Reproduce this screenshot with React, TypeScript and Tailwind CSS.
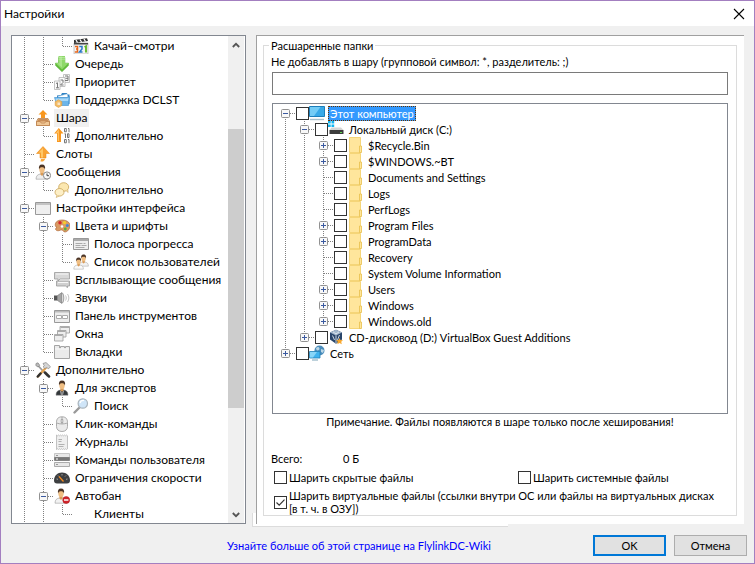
import { useState } from "react";
import type { ReactNode } from "react";

type TreeNode = {
  id: string;
  label: string;
  // one character per column: "|" passes through, "T" has a sibling below,
  // "L" is the last one, "F" is the very first one
  guides: string;
  toggle?: "+" | "-";
  icon?: ReactNode;
};

function Icon({ children }: { children?: ReactNode }) {
  return (
    <svg width="16" height="16" viewBox="0 0 16 16" className="shrink-0" aria-hidden="true">
      {children}
    </svg>
  );
}

const Person = ({ body, x = 0 }: { body: string; x?: number }) => (
  <g transform={`translate(${x} 0)`}>
    <path d="M1 15.2c0-3.6 1.8-4.8 5-5.4h2c3.200.6 5 1.800 5 5.400Z" fill={body} stroke="#8a8a8a" strokeWidth=".5" />
    <path d="M5.500 8h3v2.500L7 12l-1.500-1.500Z" fill="#d99a55" />
    <ellipse cx="7" cy="5.500" rx="2.700" ry="3.600" fill="#f0be82" />
    <path d="M4 5.500C3.500 2.500 4.500.6 7 .6s3.500 1.900 3 4.900C9.500 3.800 8.500 3.300 7 3.300S4.500 3.800 4 5.500Z" fill="#4b3425" />
  </g>
);

const movieIcon = (
  <Icon>
    <path d="M1 5h14v11H1Z" fill="#f4f4f4" stroke="#aaa" strokeWidth=".6" />
    <path d="M1 2 14 .3 15 3 1 5Z" fill="#333" />
    <path d="m3 2 1.500 2.500M7 1.500 8.500 4M11 1l1.500 2.500" stroke="#fff" strokeWidth="1.300" />
    <path d="M1 5h14v1.500H1Z" fill="#444" />
    <path d="M2 8.500h2.500v2.500H3h1.500v3H1.800" fill="none" stroke="#e8681c" strokeWidth="1.500" />
    <path d="M6.300 8.500h2.700v2.500l-2.500 3h3" fill="none" stroke="#2878c8" strokeWidth="1.500" />
    <path d="m11.500 9 1.500-.8v6.300" fill="none" stroke="#5bb520" strokeWidth="1.800" />
  </Icon>
);

const queueIcon = (
  <Icon>
    <path d="M4.500 1.500h6.500V7h3.500v2.500L8 15.800 1.500 9.500V7h3Z" fill="#62bb3c" stroke="#4fa42c" strokeWidth=".4" />
    <path d="M4.500 0h6.500v7h3.500L8 13.500 1.500 7h3Z" fill="#8ed86a" />
    <path d="M5.500.5H8v11L3.500 7.500h2Z" fill="#a9e58a" />
    <path d="M4.500 1.500h6.500M4.500 3.200h6.500" stroke="#c9f0b5" strokeWidth=".6" />
  </Icon>
);

const priorityIcon = (
  <Icon>
    <g fill="#fafafa" stroke="#b5b5b5" strokeWidth=".8">
      <path d="M9.500.5h6v8h-6Z" />
      <path d="M5 3.500h6v9H5Z" />
      <path d="M.5 7h5.500v8.500H.5Z" />
    </g>
    <g fill="none" stroke="#777" strokeWidth="1">
      <path d="M11 2h3v4.500h-3m.5-2.200H14" />
      <path d="M6.500 6h2.500v2.500L6.500 11H9.500" />
      <path d="m2 9.500 1.500-.7v5M2 13.800h3" />
    </g>
  </Icon>
);

const dclstIcon = (
  <Icon>
    <path d="M3 3.500 7 3l1-2h5l.5 1.500h2V12H3Z" fill="#2f82c4" />
    <path d="m4 4.500 9-2.500 1 3.500H4Z" fill="#fff" stroke="#b9d6ea" strokeWidth=".5" />
    <path d="M.5 5.500H13l2.500-1L14.500 13.500H3Z" fill="#6bb5ea" stroke="#3d8fcd" strokeWidth=".6" />
    <path d="M1.500 6.500H13l1.500-.7L14 9H2Z" fill="#a7d8f8" />
    <path d="m4.500 7.800 3.300 1.900v3.800l-3.300 1.900-3.300-1.900V9.700Z" fill="#f3bd68" stroke="#dd9a3a" strokeWidth=".6" />
    <path d="M3.500 10.500h2.500v2.500H3.500Z" fill="#fff" opacity=".6" />
  </Icon>
);

const shareIcon = (
  <Icon>
    <path d="M8 0 12.500 4.500H10V8H6V4.500H3.500Z" fill="#f8971e" />
    <path d="m3 8.500-1.500 3v4h13v-4l-1.500-3Z" fill="#f2c894" stroke="#ad7440" strokeWidth=".7" />
    <path d="M3.500 9h9l1 2.500h-11Z" fill="#c98d58" />
    <path d="M1.500 11.500h3.800L6.200 13h3.600l.9-1.500h3.800v4h-13Z" fill="#f0c795" stroke="#b87a45" strokeWidth=".7" />
  </Icon>
);

const shareMoreIcon = (
  <Icon>
    <path d="m4.800 0 4.700 5.500H7V14H3V5.500H.2Z" fill="#f8971e" />
    <path d="m4.800 1 .3 12H3.800V5H2Z" fill="#ffc266" />
    <g fill="none" stroke="#666" strokeWidth=".9">
      <path d="M10.500.5h1.800v3.300h-1.800Zm3.500 0h1v3.700M10.500 5.800h1V10m2-4.200H15v3.700h-1.500ZM10.500 11.500h1.800v3.300h-1.800Zm3.500 0h1v3.700" />
    </g>
  </Icon>
);

const slotsIcon = (
  <Icon>
    <path d="M8 .5 14.500 7.500H11V12H5V7.500H1.500Z" fill="#f9a333" stroke="#e8860e" strokeWidth=".5" />
    <path d="M8 2v9.500H6V6.500H3.800Z" fill="#ffc766" />
    <path d="M6 13h2.500l1-.5.5 1.300-2 1.700H5.500Z" fill="#f9a83a" />
  </Icon>
);

const messagesIcon = (
  <Icon>
    <Person body="#eeeeee" />
    <circle cx="12" cy="11.500" r="3.600" fill="#fafafa" stroke="#888" />
    <path d="M12 9.500v2.200h2" fill="none" stroke="#444" />
  </Icon>
);

const chatIcon = (
  <Icon>
    <ellipse cx="9.700" cy="5" rx="5" ry="4.300" fill="#fbe7b0" stroke="#c9a356" strokeWidth=".8" />
    <path d="m12 8.500 2 2-.2-3" fill="#fbe7b0" stroke="#c9a356" strokeWidth=".6" />
    <ellipse cx="5.500" cy="10.300" rx="4.500" ry="3.800" fill="#fdefc6" stroke="#c9a356" strokeWidth=".8" />
    <path d="m3 13.300-.8 2.200 3-1.500" fill="#fdefc6" stroke="#c9a356" strokeWidth=".6" />
  </Icon>
);

const windowIcon = (
  <Icon>
    <path d="M.5 2.500h15v12H.5Z" fill="#efefef" stroke="#999" />
    <path d="M1 3h14v2H1Z" fill="#c4c4c4" />
  </Icon>
);

const paletteIcon = (
  <Icon>
    <path d="M8 2c4.500 0 8 2.200 8 5.500S13.500 14 11 14c-2 0-1.500-2-3.500-2-1.500 0-2 1-4 .7C1 12.300 1 10 3 9.500 0 8.500.2 2 8 2Z" fill="#d99a63" stroke="#a8622f" strokeWidth=".6" />
    <circle cx="6" cy="4.800" r="1.700" fill="#d8282b" />
    <circle cx="10.500" cy="4.600" r="1.600" fill="#f4cf2a" />
    <circle cx="13.300" cy="7.500" r="1.500" fill="#3e87d6" />
    <circle cx="11.300" cy="11" r="1.400" fill="#56b33b" />
    <circle cx="8" cy="8.500" r="1.300" fill="#fff" />
  </Icon>
);

const progressIcon = (
  <Icon>
    <path d="M.5 2.500h15v11H.5Z" fill="#eee" stroke="#999" />
    <path d="M1 3h14v2H1Z" fill="#aaa" />
    <path d="M2.500 7.500h7m1 0h2M2.500 9.500h5m1 0h5M2.500 11.500h9" stroke="#aaa" />
  </Icon>
);

const usersIcon = (
  <Icon>
    <g transform="translate(5 0) scale(.8)">
      <Person body="#f2f2f2" />
    </g>
    <g transform="translate(0 3) scale(.8)">
      <Person body="#fafafa" />
    </g>
  </Icon>
);

const popupIcon = (
  <Icon>
    <path d="M.5.5h15v6.500H6L4 9V7H.5Z" fill="#d8d8d8" stroke="#999" strokeWidth=".8" />
    <path d="M2 2h12" stroke="#f7f7f7" />
    <path d="M15.500 9H2.500v5h9l2 1.700V14h2Z" fill="#d0d0d0" stroke="#999" strokeWidth=".8" />
    <path d="M4 10.500h10" stroke="#f7f7f7" />
  </Icon>
);

const soundIcon = (
  <Icon>
    <path d="M0 5.500h3.500v5H0Z" fill="#555" />
    <path d="m3.500 5.500 4.500-3v11l-4.500-3Z" fill="#a5a5a5" stroke="#777" strokeWidth=".6" />
    <path d="M8.500 3c1.800 2 1.800 8 0 10" fill="#ddd" stroke="#888" strokeWidth=".8" />
    <path d="M11.500 5.500c1 1.500 1 3.500 0 5m2-6.500c1.800 2.300 1.800 5.700 0 8" fill="none" stroke="#bbb" strokeWidth=".9" />
  </Icon>
);

const toolbarIcon = (
  <Icon>
    <path d="M.5 2.500h15v12H.5Z" fill="#ececec" stroke="#999" />
    <path d="M1 3h14v1.500H1Z" fill="#bbb" />
    <path d="M2.500 7.500h5v3h-5Zm6 0h5v3h-5Z" fill="#fff" stroke="#aaa" />
  </Icon>
);

const windowsIcon = (
  <Icon>
    <g fill="#eee" stroke="#999" strokeWidth=".8">
      <path d="M6 .5h9.500V7H6Z" />
      <path d="M3.500 4.500H12V11H3.500Z" />
      <path d="M.5 8.500H9V15H.5Z" />
    </g>
    <path d="M6.500 1.500H15M4 5.500h7.500M1 9.500h7.500" stroke="#aaa" />
  </Icon>
);

const tabsIcon = (
  <Icon>
    <path d="M.5 1.500h5V4h1V2.500h4V4h1V2.500h4v12H.5Z" fill="#ebebeb" stroke="#a5a5a5" />
    <path d="M1 5h14" stroke="#fafafa" />
  </Icon>
);

const toolsIcon = (
  <Icon>
    <path d="m2.500 3 10 11" stroke="#9a9a9a" strokeWidth="1.800" />
    <path d="M1 1.500 3 .8l1.800 2.500L3 5 .8 3.500Z" fill="#bbb" stroke="#777" strokeWidth=".6" />
    <path d="M11.500 5 3 14.500" stroke="#e6a452" strokeWidth="2.400" strokeLinecap="round" />
    <path d="m5.500 11.500-2.700 3" stroke="#303030" strokeWidth="2.500" strokeLinecap="round" />
    <path d="m8 1.500 3-1 4.500 4.200-1.800 2-2.200-1L9.800 6.500 8.200 5l1-1.500Z" fill="#d5d5d5" stroke="#777" strokeWidth=".6" />
    <path d="m10 10.500 4 4" stroke="#333" strokeWidth="2.500" strokeLinecap="round" />
  </Icon>
);

const expertIcon = (
  <Icon>
    <Person body="#33373a" x={1} />
    <path d="m6.300 10.500 1.700 2 1.700-2L9 15H7Z" fill="#fff" />
    <path d="M8 11.500V15" stroke="#222" />
  </Icon>
);

const searchIcon = (
  <Icon>
    <path d="m6 10-4.500 4.500" stroke="#999" strokeWidth="2.400" strokeLinecap="round" />
    <circle cx="9.800" cy="5.500" r="4.700" fill="#cfe5f8" stroke="#a9b4bc" strokeWidth="1.200" />
    <path d="M7 5c.5-2 2-2.800 4-2.500" fill="none" stroke="#fff" strokeWidth="1.300" />
  </Icon>
);

const mouseIcon = (
  <Icon>
    <path d="M2.500 6.500C2.500 2.500 4.500.8 8 .8s5.500 1.700 5.500 5.700v4c0 3-2.200 5-5.500 5s-5.500-2-5.500-5Z" fill="#ebebeb" stroke="#999" strokeWidth=".8" />
    <path d="M2.700 7c3.500 1.300 7 1.300 10.600 0M8 1v2.500m0 3V8" fill="none" stroke="#999" strokeWidth=".8" />
    <path d="M7.200 3.500h1.600v3H7.200Z" fill="#fff" stroke="#888" strokeWidth=".7" />
  </Icon>
);

const logIcon = (
  <Icon>
    <path d="m2.500 1 1 .8 1-.8 1 .8 1-.8 1 .8 1-.8 1 .8 1-.8 1 .8 1-.8 1 .8v13l-1 .8-1-.8-1 .8-1-.8-1 .8-1-.8-1 .8-1-.8-1 .8-1-.8-1 .8Z" fill="#efefef" stroke="#aaa" strokeWidth=".7" />
    <path d="M4.500 5.500H8m-3.500 2h3m-3 3h6m-6 2h5" stroke="#aaa" strokeWidth=".9" />
  </Icon>
);

const commandsIcon = (
  <Icon>
    <path d="M.5 1.500h15v4H.5Z" fill="#e8e8e8" stroke="#bbb" strokeWidth=".8" />
    <path d="M.5 5.500h15v3H.5Z" fill="#777" stroke="#777" strokeWidth=".8" />
    <path d="M.5 10.500h15v4H.5Z" fill="#e8e8e8" stroke="#999" strokeWidth=".8" />
    <path d="M2 3.500h2m-2 9h2" stroke="#999" />
    <path d="M2 7h2" stroke="#fff" />
  </Icon>
);

const speedIcon = (
  <Icon>
    <path d="M0 10.500C0 5.500 3.500 2.500 8 2.500s8 3 8 8c0 2-1 3-3 3H3c-2 0-3-1-3-3Z" fill="#3d3f41" />
    <path d="m2.500 9 1.500.3M4 5.500l1 1M8 4v1.500m4 0-1 1M13.500 9 12 9.300" stroke="#bbb" strokeWidth=".8" />
    <path d="m5 6.500 4.500 5" stroke="#f58a1f" strokeWidth="1.300" />
  </Icon>
);

const banIcon = (
  <Icon>
    <Person body="#f2f2f2" />
    <circle cx="12.200" cy="12" r="3.500" fill="#d0232a" stroke="#a81a1f" strokeWidth=".5" />
    <path d="M10 12h4.400" stroke="#fff" strokeWidth="1.500" />
  </Icon>
);

const computerIcon = (
  <Icon>
    <path d="M.5 1.500h15v10H.5Z" fill="#38a9e8" stroke="#1d7fbb" />
    <path d="M1 2h10.500L5 11H1Z" fill="#74ccf6" />
    <path d="M1 14.500h14" stroke="#a9c0cc" strokeWidth="1.400" />
  </Icon>
);

const driveIcon = (
  <Icon>
    <path d="M0 0h2.700v2.500H0Zm3.500 0h2.700v2.500H3.500ZM0 3.400h2.700V6H0Zm3.500 0h2.700V6H3.500Z" fill="#13b5f0" />
    <path d="m1.500 9 2-2.500h9.500L15.500 9Z" fill="#d5d5d5" />
    <path d="M1.500 9h14v4h-14Z" fill="#3c3c3c" />
    <path d="M12 11.500h2" stroke="#5fdc52" />
  </Icon>
);

const folderIcon = (
  <Icon>
    <path d="M2.500.5h11v15h-11Z" fill="#ffe69c" stroke="#f3cd62" strokeWidth=".8" />
    <path d="M12.500 9h2v6.500h-2Z" fill="#ffe69c" stroke="#e9bf4b" strokeWidth=".8" />
  </Icon>
);

const discIcon = (
  <Icon>
    <path d="m8 .8 6 2.700v7L8 14.800l-6-4.300v-7Z" fill="#28456b" />
    <path d="M8 6.500 2 3.500 8 .8l6 2.700Z" fill="#a4b9ce" />
    <path d="m5 3 3 1.800L11 3M8 6.500V14M4.500 6.500l2 4.500M11.500 6l-2 5" fill="none" stroke="#dde6ee" strokeWidth=".9" />
    <path d="m11.500 9 1 2 2.500.2-1.800 1.600.6 2.400-2.300-1.200L9.300 15.200l.5-2.400L8 11.200l2.500-.2Z" fill="#f8a72c" />
  </Icon>
);

const networkIcon = (
  <Icon>
    <circle cx="10.500" cy="5.500" r="5" fill="#4b8dbb" />
    <path d="M7 3c2-1.500 3-1 3.500.5S8.500 6 7.500 5Zm5 1 3 1-1 3-2-1Z" fill="#bcd7e6" />
    <path d="M.5 6.500h10.500v6.500H.5Z" fill="#3fb2ee" stroke="#2381b6" strokeWidth=".8" />
    <path d="M1 7h7L4 12.500H1Z" fill="#88d5f8" />
    <path d="M3 15h6" stroke="#9ab8c8" strokeWidth="1.300" />
  </Icon>
);

const pages: TreeNode[] = [
  { id: "preview", label: "Качай–смотри", guides: "||L", icon: movieIcon },
  { id: "queue", label: "Очередь", guides: "|T", icon: queueIcon },
  { id: "priority", label: "Приоритет", guides: "|T", icon: priorityIcon },
  { id: "dclst", label: "Поддержка DCLST", guides: "|L", icon: dclstIcon },
  { id: "share", label: "Шара", guides: "T", toggle: "-", icon: shareIcon },
  { id: "share-more", label: "Дополнительно", guides: "|L", icon: shareMoreIcon },
  { id: "slots", label: "Слоты", guides: "T", icon: slotsIcon },
  { id: "messages", label: "Сообщения", guides: "T", toggle: "-", icon: messagesIcon },
  { id: "messages-more", label: "Дополнительно", guides: "|L", icon: chatIcon },
  { id: "ui", label: "Настройки интерфейса", guides: "T", toggle: "-", icon: windowIcon },
  { id: "colors", label: "Цвета и шрифты", guides: "|T", toggle: "-", icon: paletteIcon },
  { id: "progress", label: "Полоса прогресса", guides: "||T", icon: progressIcon },
  { id: "users", label: "Список пользователей", guides: "||L", icon: usersIcon },
  { id: "popups", label: "Всплывающие сообщения", guides: "|T", icon: popupIcon },
  { id: "sounds", label: "Звуки", guides: "|T", icon: soundIcon },
  { id: "toolbar", label: "Панель инструментов", guides: "|T", icon: toolbarIcon },
  { id: "windows", label: "Окна", guides: "|T", icon: windowsIcon },
  { id: "tabs", label: "Вкладки", guides: "|L", icon: tabsIcon },
  { id: "advanced", label: "Дополнительно", guides: "T", toggle: "-", icon: toolsIcon },
  { id: "experts", label: "Для экспертов", guides: "|T", toggle: "-", icon: expertIcon },
  { id: "search", label: "Поиск", guides: "||L", icon: searchIcon },
  { id: "click", label: "Клик-команды", guides: "|T", icon: mouseIcon },
  { id: "logs", label: "Журналы", guides: "|T", icon: logIcon },
  { id: "commands", label: "Команды пользователя", guides: "|T", icon: commandsIcon },
  { id: "speed", label: "Ограничения скорости", guides: "|T", icon: speedIcon },
  { id: "autoban", label: "Автобан", guides: "|T", toggle: "-", icon: banIcon },
  { id: "clients", label: "Клиенты", guides: "||L" },
];

const folders: TreeNode[] = [
  { id: "pc", label: "Этот компьютер", guides: "F", toggle: "-", icon: computerIcon },
  { id: "c", label: "Локальный диск (C:)", guides: "|T", toggle: "-", icon: driveIcon },
  { id: "recycle", label: "$Recycle.Bin", guides: "||T", toggle: "+", icon: folderIcon },
  { id: "bt", label: "$WINDOWS.~BT", guides: "||T", toggle: "+", icon: folderIcon },
  { id: "docs", label: "Documents and Settings", guides: "||T", icon: folderIcon },
  { id: "logs", label: "Logs", guides: "||T", icon: folderIcon },
  { id: "perf", label: "PerfLogs", guides: "||T", icon: folderIcon },
  { id: "pf", label: "Program Files", guides: "||T", toggle: "+", icon: folderIcon },
  { id: "pd", label: "ProgramData", guides: "||T", toggle: "+", icon: folderIcon },
  { id: "recovery", label: "Recovery", guides: "||T", icon: folderIcon },
  { id: "svi", label: "System Volume Information", guides: "||T", icon: folderIcon },
  { id: "usr", label: "Users", guides: "||T", toggle: "+", icon: folderIcon },
  { id: "win", label: "Windows", guides: "||T", toggle: "+", icon: folderIcon },
  { id: "old", label: "Windows.old", guides: "||L", toggle: "+", icon: folderIcon },
  { id: "d", label: "CD-дисковод (D:) VirtualBox Guest Additions", guides: "|L", toggle: "+", icon: discIcon },
  { id: "net", label: "Сеть", guides: "L", toggle: "+", icon: networkIcon },
];

function Guides({ node, height }: { node: TreeNode; height: number }) {
  const mid = height / 2;
  return (
    <>
      {node.guides.split("").map((g, i) => {
        const own = i === node.guides.length - 1;
        return (
          <svg key={i} width="19" height={height} className="shrink-0" aria-hidden="true">
            <line
              x1="9.5"
              x2="9.5"
              y1={g === "F" ? mid : 0}
              y2={g === "L" ? mid : height}
              stroke="#808080"
              strokeDasharray="1 1"
            />
            {own && <line x1="10" x2="19" y1={mid + 0.5} y2={mid + 0.5} stroke="#808080" strokeDasharray="1 1" />}
            {own && node.toggle && (
              <>
                <rect x="5.5" y={mid - 3.5} width="8" height="8" rx="1" fill="#f8f8f8" stroke="#919191" />
                <path
                  d={node.toggle === "+" ? `M7 ${mid + 0.5}h5M9.500 ${mid - 2}v5` : `M7 ${mid + 0.5}h5`}
                  stroke="#3b5aa0"
                />
              </>
            )}
          </svg>
        );
      })}
    </>
  );
}

function CheckBox({ id, defaultChecked }: { id: string; defaultChecked?: boolean }) {
  return (
    <span className="grid size-[13px] shrink-0">
      <input
        id={id}
        type="checkbox"
        defaultChecked={defaultChecked}
        className="peer col-start-1 row-start-1 size-[13px] appearance-none border border-[#333333] bg-white"
      />
      <svg
        viewBox="0 0 13 13"
        className="pointer-events-none invisible col-start-1 row-start-1 size-[13px] peer-checked:visible"
        aria-hidden="true"
      >
        <path d="m2.500 6.500 2.700 2.700 5.300-5.500" fill="none" stroke="#333" strokeWidth="1.200" />
      </svg>
    </span>
  );
}

function Chevron({ up }: { up?: boolean }) {
  return (
    <svg width="8" height="6" viewBox="0 0 8 6" aria-hidden="true">
      <path d={up ? "M.8 5 4 1.800 7.200 5" : "M.8 1 4 4.200 7.200 1"} fill="none" stroke="#555" strokeWidth="1.800" />
    </svg>
  );
}

export default function App() {
  const [page, setPage] = useState("share");
  const [folder, setFolder] = useState("pc");

  return (
    <div className="flex min-h-screen flex-col border border-[#a37fc0] bg-[#f0f0f0] font-['Lato',sans-serif] text-[11px] leading-[13px] text-black">
      {/* Title bar */}
      <header className="flex h-[25px] items-center justify-between bg-white pr-[9px] pl-[3px]">
        <h1 className="text-xs">Настройки</h1>
        <button type="button" aria-label="Закрыть" className="grid size-3 place-items-center">
          <svg width="12" height="12" viewBox="0 0 12 12">
            <path d="m1 1 10 10M11 1 1 11" stroke="#000" strokeWidth="1.100" />
          </svg>
        </button>
      </header>

      <main className="flex flex-1 gap-[10px] pt-[9px] pr-[10px] pl-[10px]">
        {/* Page tree */}
        <nav className="flex w-[235px] shrink-0 border border-[#828790] bg-white">
          <ul className="min-w-0 flex-1 overflow-hidden pt-px pl-[3px] text-xs leading-[18px]">
            {pages.map((node) => (
              <li key={node.id} className="flex h-[18px] items-center">
                <Guides node={node} height={18} />
                <span className="flex items-center gap-[3px] pl-px">
                  {node.icon ?? <Icon />}
                  <button
                    type="button"
                    onClick={() => setPage(node.id)}
                    className={`px-[2px] whitespace-nowrap ${page === node.id ? "bg-[#f0f0f0]" : ""}`}
                  >
                    {node.label}
                  </button>
                </span>
              </li>
            ))}
          </ul>
          <div className="mr-px flex w-4 flex-col bg-[#f0f0f0]">
            <button type="button" aria-label="Вверх" className="grid h-[17px] place-items-center">
              <Chevron up />
            </button>
            <div className="flex-[76]" />
            <div className="flex-[279] bg-[#cdcdcd]" />
            <div className="flex-[98]" />
            <button type="button" aria-label="Вниз" className="grid h-[17px] place-items-center">
              <Chevron />
            </button>
          </div>
        </nav>

        {/* Share page */}
        <div className="relative flex min-w-0 flex-1">
          <div className="absolute -bottom-[3px] -left-1 h-[14px] w-64 border-b border-l border-[#dcdcdc] bg-white" />
          <section className="relative flex min-w-0 flex-1 flex-col border-t border-l border-[#a0a0a0] bg-white pt-[3px] pr-[7px] pb-2 pl-[6px]">
            <fieldset className="flex min-w-0 flex-1 flex-col border border-[#dcdcdc] px-2">
              <legend className="-ml-[3px] px-[2px]">Расшаренные папки</legend>
              <div className="flex flex-1 flex-col pt-[3px]">
                <label htmlFor="skip" className="-ml-px">
                  Не добавлять в шару (групповой символ: *, разделитель: ;)
                </label>
                <input id="skip" type="text" className="mt-1 h-[23px] border border-[#7a7a7a] bg-white px-1" />

                <ul className="mt-2 flex-1 border border-[#828790] bg-white pt-px pl-[3px]">
                  {folders.map((node) => (
                    <li key={node.id} className="flex h-4 items-center">
                      <Guides node={node} height={16} />
                      <span className="flex items-center pl-px">
                        <CheckBox id={`folder-${node.id}`} />
                        {node.icon}
                        <label
                          htmlFor={`folder-${node.id}`}
                          onClick={() => setFolder(node.id)}
                          className={`ml-[3px] border border-dotted px-px whitespace-nowrap ${
                            folder === node.id ? "border-[#663300] bg-[#3399ff] text-white" : "border-transparent"
                          }`}
                        >
                          {node.label}
                        </label>
                      </span>
                    </li>
                  ))}
                </ul>

                <p className="mt-px text-center">Примечание. Файлы появляются в шаре только после хеширования!</p>

                <div className="mt-6 -ml-px flex">
                  <span className="w-[72px]">Всего:</span>
                  <output>0 Б</output>
                </div>

                <div className="mt-[6px] grid grid-cols-[244px_1fr] gap-y-[5px] pl-[2px]">
                  <div className="flex items-center gap-[2px]">
                    <CheckBox id="hidden" />
                    <label htmlFor="hidden">Шарить скрытые файлы</label>
                  </div>
                  <div className="flex items-center gap-[2px]">
                    <CheckBox id="system" />
                    <label htmlFor="system">Шарить системные файлы</label>
                  </div>
                  <div className="col-span-2 flex items-center gap-[2px]">
                    <CheckBox id="virtual" defaultChecked />
                    <label htmlFor="virtual">
                      Шарить виртуальные файлы (ссылки внутри ОС или файлы на виртуальных дисках
                      <br />
                      [в т. ч. в ОЗУ])
                    </label>
                  </div>
                </div>
              </div>
            </fieldset>
          </section>
        </div>
      </main>

      {/* Footer */}
      <footer className="flex items-center justify-end gap-2 pt-[11px] pr-[7px] pb-[7px]">
        <a href="#wiki" className="mr-auto pl-[226px] text-[#0000ff]">
          Узнайте больше об этой странице на FlylinkDC-Wiki
        </a>
        <button type="button" className="h-[21px] w-[73px] border-2 border-[#0078d7] bg-[#e1e1e1]">
          OK
        </button>
        <button type="button" className="h-[21px] w-[73px] border border-[#adadad] bg-[#e1e1e1]">
          Отмена
        </button>
      </footer>
    </div>
  );
}
